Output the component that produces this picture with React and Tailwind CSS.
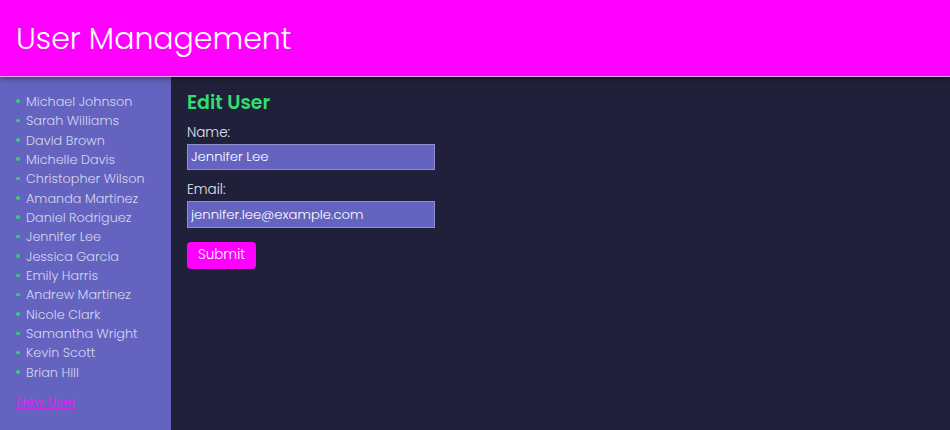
import React from 'react'

const users = [
  'Michael Johnson',
  'Sarah Williams',
  'David Brown',
  'Michelle Davis',
  'Christopher Wilson',
  'Amanda Martinez',
  'Daniel Rodriguez',
  'Jennifer Lee',
  'Jessica Garcia',
  'Emily Harris',
  'Andrew Martinez',
  'Nicole Clark',
  'Samantha Wright',
  'Kevin Scott',
  'Brian Hill',
]

export default function App() {
  return (
    <div className="h-[430px] w-[950px] flex flex-col overflow-hidden bg-[#20203a] font-['Poppins','Inter','Noto_Sans',sans-serif]">
      {/* header */}
      <header className="h-[77px] shrink-0 bg-[#ff00ff] border-b border-[#d8a8e8] flex items-center px-4 shadow-[0_2px_6px_rgba(0,0,0,0.35)] relative z-10">
        <h1 className="text-[30px] font-light text-white mt-[1px]">User Management</h1>
      </header>

      <div className="flex flex-1 min-h-0">
        {/* sidebar */}
        <aside className="w-[171px] shrink-0 bg-[#6464c0] pl-4 pt-[15px]">
          <ul className="text-[12.8px] leading-[19.35px] text-[#d6d6ee] font-light">
            {users.map((u) => (
              <li key={u} className="flex items-center">
                <span className="w-[3.5px] h-[3.5px] rounded-full bg-[#2ed573] mr-[6.5px] mb-[1px]" />
                {u}
              </li>
            ))}
          </ul>
          <a href="#" className="inline-block mt-[12px] text-[13px] leading-[16px] text-[#e020f0] underline underline-offset-2">New User</a>
        </aside>

        {/* main */}
        <main className="flex-1 px-4 pt-[13px]">
          <h2 className="text-[19px] font-semibold text-[#33dd70] leading-[26px]">Edit User</h2>
          <form className="mt-[7px] text-[13.5px] text-[#e4e4ee] font-light">
            <label className="block leading-[20px]">Name:</label>
            <input
              className="block mt-[1px] w-[248px] h-[26px] bg-[#6464c0] border border-[#9090d0] px-[3px] text-white text-[13.2px] font-light outline-none"
              defaultValue="Jennifer Lee"
            />
            <label className="block mt-[10px] leading-[20px]">Email:</label>
            <input
              className="block mt-[1px] w-[248px] h-[27px] bg-[#6464c0] border border-[#9090d0] px-[3px] text-white text-[13.2px] font-light outline-none"
              defaultValue="jennifer.lee@example.com"
            />
            <button
              type="button"
              className="mt-[14px] h-[27px] w-[69px] rounded-[4px] bg-[#ff00ff] text-white text-[13.5px]"
            >
              Submit
            </button>
          </form>
        </main>
      </div>
    </div>
  )
}
